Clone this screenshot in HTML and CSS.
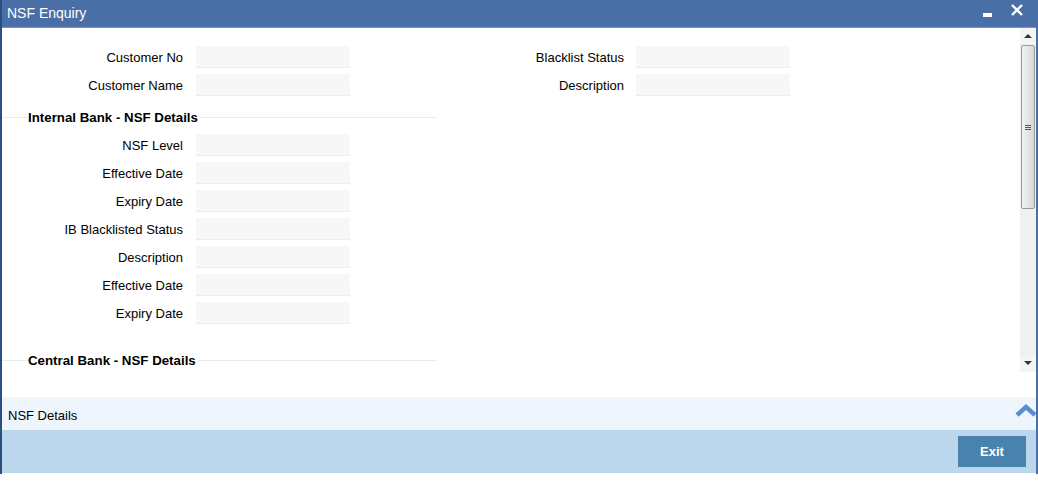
FILE: index.html
```html
<!DOCTYPE html>
<html>
<head>
<meta charset="utf-8">
<link rel="stylesheet" href="styles.css">
</head>
<body>
<div class="window">
  <div class="titlebar">
    <span class="title">NSF Enquiry</span>
    <div class="controls">
      <span class="min"></span>
      <svg class="close" width="14" height="14" viewBox="0 0 14 14"><path d="M2 2L12 12M12 2L2 12" stroke="#fff" stroke-width="2.4"/></svg>
    </div>
  </div>
  <div class="body">
    <div class="content">
      <div class="top">
        <div class="col">
          <div class="row"><label>Customer No</label><div class="field"></div></div>
          <div class="row"><label>Customer Name</label><div class="field"></div></div>
        </div>
        <div class="col col-right">
          <div class="row"><label>Blacklist Status</label><div class="field"></div></div>
          <div class="row"><label>Description</label><div class="field"></div></div>
        </div>
      </div>
      <div class="section"><span>Internal Bank - NSF Details</span></div>
      <div class="col">
        <div class="row"><label>NSF Level</label><div class="field"></div></div>
        <div class="row"><label>Effective Date</label><div class="field"></div></div>
        <div class="row"><label>Expiry Date</label><div class="field"></div></div>
        <div class="row"><label>IB Blacklisted Status</label><div class="field"></div></div>
        <div class="row"><label>Description</label><div class="field"></div></div>
        <div class="row"><label>Effective Date</label><div class="field"></div></div>
        <div class="row"><label>Expiry Date</label><div class="field"></div></div>
      </div>
      <div class="section section2"><span>Central Bank - NSF Details</span></div>
    </div>
    <div class="scrollbar">
      <div class="arrow up"></div>
      <div class="thumb"><span></span><span></span><span></span></div>
      <div class="track"></div>
      <div class="arrow down"></div>
    </div>
  </div>
  <div class="tabbar">
    <span>NSF Details</span>
    <svg class="chev" width="24" height="14" viewBox="0 0 24 14"><path d="M3 12L12 4L21 12" fill="none" stroke="#5b8ed0" stroke-width="4.5"/></svg>
  </div>
  <div class="footer">
    <button class="exit">Exit</button>
  </div>
</div>
</body>
</html>
```
FILE: styles.css
```css
* { box-sizing: border-box; }
html, body { margin: 0; padding: 0; background: #fff; }
body { font-family: Arial, "Liberation Sans", sans-serif; font-size: 13px; color: #000; }
.window {
  width: 1038px; height: 474px;
  border-left: 2px solid #2a4f82; border-right: 2px solid #4a6fa6;
  display: flex; flex-direction: column;
}
.titlebar {
  height: 28px; background: #4a6fa6;
  border-bottom: 1px solid #7a95bd;
  display: flex; align-items: center; justify-content: space-between;
  padding: 0 12px 0 5px; color: #fff;
}
.title { font-size: 14px; margin-top: -2px; }
.controls { display: flex; align-items: center; gap: 18px; margin-top: -8px; }
.min { width: 9px; height: 4px; background: #fff; margin-top: 10px; }
.body { height: 368px; display: flex; background: #fff; }
.content { flex: 1; padding-top: 18px; }
.top { display: flex; }
.col { display: flex; flex-direction: column; gap: 6px; }
.row { display: flex; align-items: center; height: 22px; }
.row label { width: 181px; flex-shrink: 0; text-align: right; font-size: 13px; }
.col-right label { width: 274px; }
.field {
  width: 154px; height: 22px; margin-left: 13px; flex-shrink: 0;
  background: #f7f7f7; border-bottom: 1px solid #ececec;
}
.col-right .field { margin-left: 12px; }
.section {
  position: relative; height: 16px; margin: 13px 0 9px 0; width: 435px;
  display: flex; align-items: center;
}
.section::before {
  content: ""; position: absolute; left: 0; right: 0; top: 8px;
  border-top: 1px solid #e8ecf0;
}
.section span {
  position: relative; background: #fff; margin-left: 26px; padding-right: 2px;
  font-weight: bold; font-size: 13.3px;
}
.section2 { margin-top: 28px; }
.scrollbar {
  width: 16px; height: 344px; display: flex; flex-direction: column;
  background: #f0f0f0;
}
.arrow { height: 17px; background: #f4f4f4; position: relative; }
.arrow::after {
  content: ""; position: absolute; left: 4px; width: 0; height: 0;
  border-left: 4px solid transparent; border-right: 4px solid transparent;
}
.arrow.up::after { top: 6px; border-bottom: 4px solid #333; }
.arrow.down::after { top: 6px; border-top: 4px solid #333; }
.thumb {
  height: 164px; margin: 0 1px; border: 1px solid #9a9a9a; border-radius: 2px;
  background: linear-gradient(to right, #f2f2f2, #e2e2e2 60%, #d6d6d6);
  display: flex; flex-direction: column; align-items: center; justify-content: center; gap: 1px;
}
.thumb span { width: 6px; height: 1px; background: #555; }
.track { flex: 1; }
.tabbar {
  height: 33px; margin-top: 1px; background: #eef5fd;
  display: flex; align-items: center; justify-content: space-between;
  padding: 3px 0 0 6px; font-size: 13px;
}
.chev { margin-top: -10px; margin-right: -2px; }
.footer {
  height: 43px; background: #bcd7ec;
  display: flex; align-items: flex-start; justify-content: flex-end;
  padding: 6px 10px 0 0;
}
.exit {
  width: 68px; height: 31px; border: none; background: #4a82ae; color: #fff;
  font-family: Arial, "Liberation Sans", sans-serif; font-weight: bold; font-size: 13px;
}
```
